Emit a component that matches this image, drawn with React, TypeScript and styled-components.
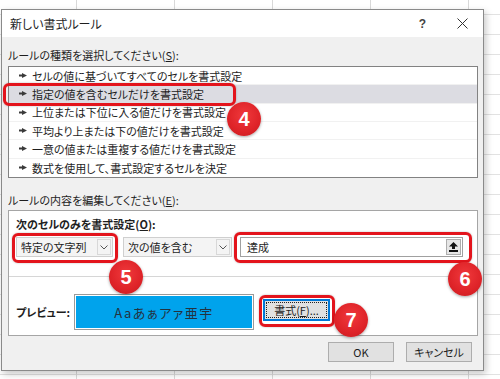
import React from "react";
import styled, { createGlobalStyle } from "styled-components";

const GlobalStyle = createGlobalStyle`
  html, body {
    margin: 0;
    padding: 0;
  }
  body {
    width: 500px;
    height: 379px;
    overflow: hidden;
    font-family: "Noto Sans CJK JP", "Noto Sans", sans-serif;
    font-feature-settings: "palt";
    color: #1e1e1e;
  }
`;

const Sheet = styled.div`
  width: 500px;
  height: 379px;
  box-sizing: border-box;
  padding: 9px 0 0 1px;
  background-color: #fff;
  background-image: linear-gradient(to right, #d9d9d9 1px, transparent 1px),
    linear-gradient(to bottom, #e2e2e2 1px, transparent 1px);
  background-size: 98px 20px;
  background-position: 76px 14px;
`;

const Dialog = styled.div`
  position: relative;
  width: 483px;
  height: 362px;
  box-sizing: border-box;
  border: 1px solid #8a8a8a;
  background: #f0f0f0;
  box-shadow: 2px 3px 7px rgba(0, 0, 0, 0.22);
  display: flex;
  flex-direction: column;
`;

const TitleBar = styled.div`
  height: 27px;
  background: #fff;
  display: flex;
  align-items: center;
  padding: 0 15px 0 8px;
  font-size: 12px;
  .title {
    flex: 1;
  }
  .help {
    font-size: 12px;
    font-weight: bold;
    color: #444;
    margin-right: 31px;
    font-family: "Liberation Sans", sans-serif;
  }
`;

const Body = styled.div`
  padding: 0 5px 0 6px;
  display: flex;
  flex-direction: column;
`;

const SectionLabel = styled.div<{ $top: number }>`
  font-size: 11px;
  line-height: 18px;
  margin-top: ${(p) => p.$top}px;
  margin-bottom: 1px;
  u {
    text-decoration: underline;
  }
`;

const RuleList = styled.div`
  height: 112px;
  box-sizing: border-box;
  border: 1px solid #828282;
  background: #fff;
  display: grid;
  grid-template-rows: repeat(6, 1fr);
  margin-top: 1px;
`;

const RuleRow = styled.div<{ $selected?: boolean }>`
  display: flex;
  align-items: center;
  gap: 5px;
  padding-left: 10px;
  font-size: 11px;
  border-bottom: 1px solid #f1f1f1;
  background: ${(p) => (p.$selected ? "#dcdce2" : "transparent")};
  &:last-child {
    border-bottom: none;
  }
`;

const GroupBox = styled.div`
  height: 126px;
  box-sizing: border-box;
  border: 1px solid #a5a5a5;
  background: #fff;
  display: flex;
  flex-direction: column;
`;

const ConditionArea = styled.div`
  height: 65px;
  padding: 4px 0 0 7px;
  box-sizing: border-box;
  .heading {
    font-size: 11px;
    font-weight: bold;
    line-height: 18px;
  }
`;

const ControlRow = styled.div`
  display: flex;
  align-items: center;
  margin-top: 4px;
  height: 20px;
`;

const Combo = styled.div<{ $width: number; $gap: number }>`
  width: ${(p) => p.$width}px;
  margin-right: ${(p) => p.$gap}px;
  height: 20px;
  box-sizing: border-box;
  border: 1px solid #cfcfcf;
  background: #f4f4f4;
  display: flex;
  align-items: center;
  padding: 0 1px 0 4px;
  font-size: 11px;
  .value {
    flex: 1;
  }
`;

const DropArrow = styled.div`
  width: 14px;
  height: 16px;
  box-sizing: border-box;
  border: 1px solid #d8d8d8;
  background: #f4f4f4;
  display: flex;
  align-items: center;
  justify-content: center;
`;

const TextField = styled.div`
  width: 223px;
  height: 20px;
  box-sizing: border-box;
  border: 1px solid #a0a0a0;
  background: #fff;
  display: flex;
  align-items: center;
  padding: 0 1px 0 6px;
  font-size: 11px;
  .value {
    flex: 1;
  }
`;

const RefButton = styled.div`
  width: 15px;
  height: 16px;
  box-sizing: border-box;
  border: 1px solid #adadad;
  background: #e6e6e6;
  display: flex;
  align-items: center;
  justify-content: center;
`;

const PreviewArea = styled.div`
  flex: 1;
  border-top: 1px solid #d6d6d6;
  display: flex;
  align-items: flex-start;
  padding: 17px 0 0 7px;
`;

const PreviewLabel = styled.div`
  width: 58px;
  font-size: 11px;
  font-weight: bold;
  line-height: 36px;
`;

const PreviewBox = styled.div`
  width: 180px;
  height: 36px;
  box-sizing: border-box;
  border: 1px solid #9a9a9a;
  box-shadow: inset 0 0 0 1px #fff;
  background: #00a3ec;
  display: flex;
  align-items: center;
  justify-content: center;
  font-size: 13px;
  letter-spacing: 1.5px;
  color: #24323f;
  margin-right: 9px;
`;

const Button = styled.div<{ $width: number; $focused?: boolean }>`
  width: ${(p) => p.$width}px;
  height: 20px;
  box-sizing: border-box;
  border: 1px solid ${(p) => (p.$focused ? "#0078d7" : "#adadad")};
  box-shadow: ${(p) => (p.$focused ? "inset 0 0 0 1px #0078d7" : "none")};
  outline: ${(p) => (p.$focused ? "1px dotted #222" : "none")};
  outline-offset: -4px;
  background: #e1e1e1;
  display: flex;
  align-items: center;
  justify-content: center;
  font-size: 11px;
  u {
    text-decoration: underline;
  }
`;

const FormatButton = styled(Button)`
  height: 22px;
  margin-top: 5px;
`;

const Footer = styled.div`
  display: flex;
  justify-content: flex-end;
  gap: 12px;
  margin: 6px 6px 0 0;
`;

const Highlight = styled.div<{ $x: number; $y: number; $w: number; $h: number }>`
  position: absolute;
  left: ${(p) => p.$x}px;
  top: ${(p) => p.$y}px;
  width: ${(p) => p.$w}px;
  height: ${(p) => p.$h}px;
  box-sizing: border-box;
  border: 3px solid #e3141c;
  border-radius: 6px;
  box-shadow: 0 0 2px rgba(0, 0, 0, 0.3);
`;

const Badge = styled.div<{ $x: number; $y: number }>`
  position: absolute;
  left: ${(p) => p.$x}px;
  top: ${(p) => p.$y}px;
  width: 34px;
  height: 34px;
  border-radius: 50%;
  background: radial-gradient(circle at 50% 40%, #f0393c 0%, #de2328 60%, #c41b20 100%);
  box-shadow: 0 1px 3px rgba(0, 0, 0, 0.35);
  color: #fff;
  font-family: "Liberation Sans", Arial, sans-serif;
  font-weight: bold;
  font-size: 20px;
  display: flex;
  align-items: center;
  justify-content: center;
`;

const rules = [
  "セルの値に基づいてすべてのセルを書式設定",
  "指定の値を含むセルだけを書式設定",
  "上位または下位に入る値だけを書式設定",
  "平均より上または下の値だけを書式設定",
  "一意の値または重複する値だけを書式設定",
  "数式を使用して、書式設定するセルを決定",
];

const Marker = () => (
  <svg width="8" height="5" viewBox="0 0 8 5">
    <polygon points="0,1.6 3,1.6 3,0 8,2.5 3,5 3,3.4 0,3.4" fill="#3a3a3a" />
  </svg>
);

const Chevron = () => (
  <svg width="8" height="5" viewBox="0 0 8 5">
    <polyline points="0.5,0.5 4,4 7.5,0.5" fill="none" stroke="#555" strokeWidth="1" />
  </svg>
);

const UpArrow = () => (
  <svg width="9" height="10" viewBox="0 0 9 10">
    <polygon points="4.5,0 9,4.5 6,4.5 6,7 3,7 3,4.5 0,4.5" fill="#111" />
    <rect x="0" y="8" width="9" height="2" fill="#111" />
  </svg>
);

const CloseIcon = () => (
  <svg width="11" height="11" viewBox="0 0 11 11">
    <path d="M0.5 0.5 L10.5 10.5 M10.5 0.5 L0.5 10.5" stroke="#333" strokeWidth="1" />
  </svg>
);

export default function App() {
  return (
    <Sheet>
      <GlobalStyle />
      <Dialog>
        <TitleBar>
          <span className="title">新しい書式ルール</span>
          <span className="help">?</span>
          <CloseIcon />
        </TitleBar>
        <Body>
          <SectionLabel $top={9}>
            ルールの種類を選択してください(<u>S</u>):
          </SectionLabel>
          <RuleList>
            {rules.map((r, i) => (
              <RuleRow key={r} $selected={i === 1}>
                <Marker />
                {r}
              </RuleRow>
            ))}
          </RuleList>
          <SectionLabel $top={13}>
            ルールの内容を編集してください(<u>E</u>):
          </SectionLabel>
          <GroupBox>
            <ConditionArea>
              <div className="heading">
                次のセルのみを書式設定(<u>O</u>):
              </div>
              <ControlRow>
                <Combo $width={97} $gap={10}>
                  <span className="value">特定の文字列</span>
                  <DropArrow>
                    <Chevron />
                  </DropArrow>
                </Combo>
                <Combo $width={109} $gap={8}>
                  <span className="value">次の値を含む</span>
                  <DropArrow>
                    <Chevron />
                  </DropArrow>
                </Combo>
                <TextField>
                  <span className="value">達成</span>
                  <RefButton>
                    <UpArrow />
                  </RefButton>
                </TextField>
              </ControlRow>
            </ConditionArea>
            <PreviewArea>
              <PreviewLabel>プレビュー:</PreviewLabel>
              <PreviewBox>Aaあぁアァ亜宇</PreviewBox>
              <FormatButton $width={67} $focused>
                書式(<u>F</u>)...
              </FormatButton>
            </PreviewArea>
          </GroupBox>
          <Footer>
            <Button $width={66}>OK</Button>
            <Button $width={66}>キャンセル</Button>
          </Footer>
        </Body>

        <Highlight $x={1} $y={73} $w={233} $h={23} />
        <Highlight $x={10} $y={223} $w={106} $h={30} />
        <Highlight $x={232} $y={222} $w={238} $h={31} />
        <Highlight $x={257} $y={285} $w={76} $h={32} />
        <Badge $x={225} $y={92}>4</Badge>
        <Badge $x={107} $y={250}>5</Badge>
        <Badge $x={446} $y={252}>6</Badge>
        <Badge $x={332} $y={293}>7</Badge>
      </Dialog>
    </Sheet>
  );
}
